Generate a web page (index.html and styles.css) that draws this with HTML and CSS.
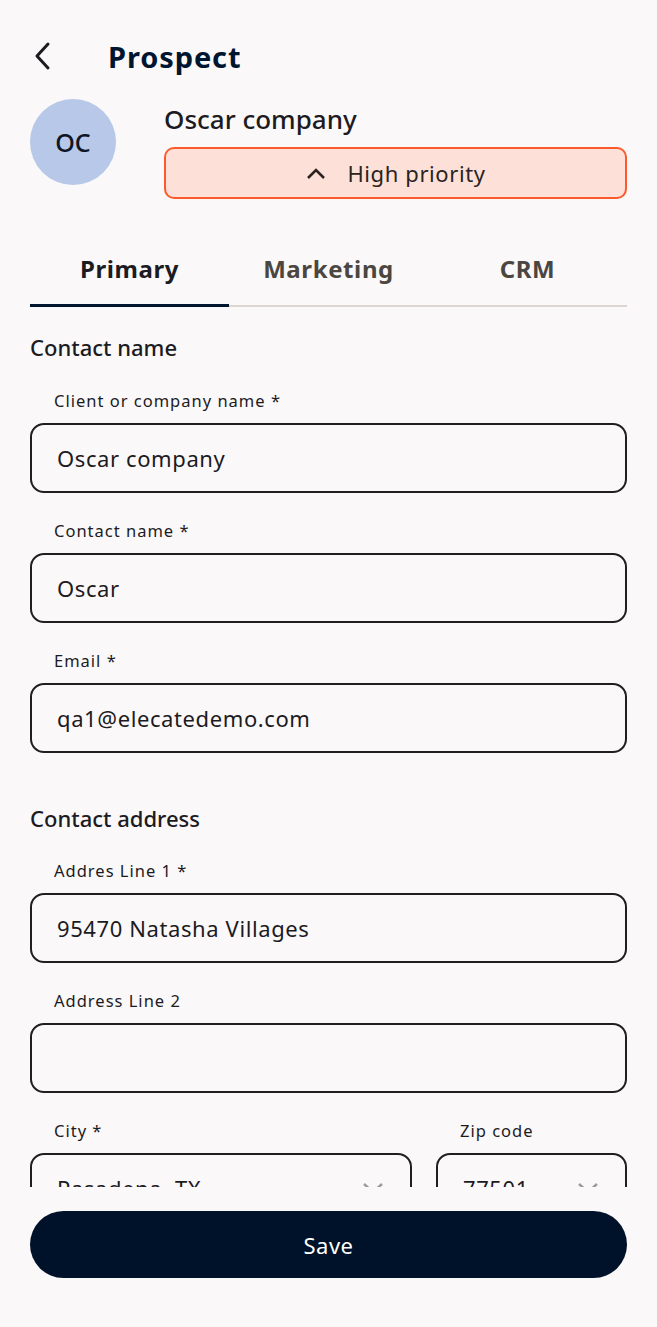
FILE: index.html
```html
<!DOCTYPE html>
<html lang="en">
<head>
<meta charset="utf-8">
<title>Prospect</title>
<link rel="stylesheet" href="styles.css">
</head>
<body>
<div class="screen">
  <div class="scroll">
    <header class="topbar">
      <button class="back" aria-label="Back">
        <svg width="20" height="30" viewBox="0 0 20 30"><path d="M16 3 L5 15 L16 27" fill="none" stroke="#1c1b1f" stroke-width="3" stroke-linecap="round" stroke-linejoin="round"/></svg>
      </button>
      <h1 class="title">Prospect</h1>
    </header>

    <section class="profile">
      <div class="avatar">OC</div>
      <div class="profile-info">
        <div class="company">Oscar company</div>
        <button class="priority">
          <svg width="22" height="14" viewBox="0 0 22 14"><path d="M3 12 L11 4 L19 12" fill="none" stroke="#2a2320" stroke-width="2.6" stroke-linejoin="miter"/></svg>
          <span>High priority</span>
        </button>
      </div>
    </section>

    <nav class="tabs">
      <div class="tab active">Primary</div>
      <div class="tab">Marketing</div>
      <div class="tab">CRM</div>
    </nav>

    <section class="group">
      <h2 class="group-title">Contact name</h2>
      <div class="field">
        <label class="label">Client or company name *</label>
        <div class="input">Oscar company</div>
      </div>
      <div class="field">
        <label class="label">Contact name *</label>
        <div class="input">Oscar</div>
      </div>
      <div class="field">
        <label class="label">Email *</label>
        <div class="input">qa1@elecatedemo.com</div>
      </div>
    </section>

    <section class="group address">
      <h2 class="group-title">Contact address</h2>
      <div class="field">
        <label class="label">Addres Line 1 *</label>
        <div class="input">95470 Natasha Villages</div>
      </div>
      <div class="field">
        <label class="label">Address Line 2</label>
        <div class="input"></div>
      </div>
      <div class="row">
        <div class="field city">
          <label class="label">City *</label>
          <div class="input select">Pasadena, TX
            <svg class="caret" width="24" height="14" viewBox="0 0 24 14"><path d="M3 3 L12 11 L21 3" fill="none" stroke="#9a9a9a" stroke-width="2.4"/></svg>
          </div>
        </div>
        <div class="field zip">
          <label class="label">Zip code</label>
          <div class="input select">77501
            <svg class="caret" width="24" height="14" viewBox="0 0 24 14"><path d="M3 3 L12 11 L21 3" fill="none" stroke="#9a9a9a" stroke-width="2.4"/></svg>
          </div>
        </div>
      </div>
    </section>
  </div>

  <footer class="footer">
    <button class="save">Save</button>
  </footer>
</div>
</body>
</html>
```

FILE: styles.css
```css
* { box-sizing: border-box; }
html, body { margin: 0; padding: 0; }
body {
  background: #fbf8f9;
  font-family: "Noto Sans", "Open Sans", sans-serif;
  color: #1c1b1f;
}
.screen {
  width: 657px;
  height: 1327px;
  display: flex;
  flex-direction: column;
}
.scroll {
  height: 1187px;
  overflow: hidden;
  padding: 0 30px;
  flex: none;
}
.topbar {
  display: flex;
  align-items: center;
  height: 56px;
  margin-top: 28px;
}
.back {
  border: 0;
  background: none;
  padding: 0;
  margin-left: 2px;
  width: 20px;
  height: 30px;
  display: flex;
}
.title {
  margin: 0 0 0 56px;
  font-size: 29px;
  font-weight: 700;
  color: #001530;
  letter-spacing: 0.9px;
}
.profile {
  display: flex;
  align-items: flex-start;
  margin-top: 15px;
}
.avatar {
  width: 86px;
  height: 86px;
  border-radius: 50%;
  background: #b7c8e8;
  color: #0d1626;
  font-size: 25px;
  font-weight: 500;
  display: flex;
  align-items: center;
  justify-content: center;
  flex: none;
}
.profile-info {
  flex: 1;
  margin-left: 48px;
  margin-right: -30px;
  padding-right: 30px;
  display: flex;
  flex-direction: column;
}
.company {
  font-size: 26px;
  font-weight: 500;
  line-height: 40px;
  color: #1c1b1f;
}
.priority {
  margin-top: 8px;
  height: 52px;
  border: 2px solid #fb5b2c;
  background: #fde0d8;
  border-radius: 10px;
  display: flex;
  align-items: center;
  justify-content: center;
  gap: 20px;
  font-family: inherit;
  font-size: 22px;
  letter-spacing: 0.6px;
  color: #2a2320;
  padding: 0;
}
.tabs {
  display: flex;
  margin-top: 48px;
  border-bottom: 2px solid #dcd6d0;
}
.tab {
  flex: 1;
  text-align: center;
  font-size: 24px;
  font-weight: 700;
  letter-spacing: 0.6px;
  color: #4b4640;
  height: 58px;
  line-height: 44px;
  position: relative;
}
.tab.active { color: #1c1b1f; }
.tab.active::after {
  content: "";
  position: absolute;
  left: 0; right: 0; bottom: -2px;
  height: 3px;
  background: #001530;
}
.group-title {
  margin: 0;
  font-size: 22px;
  font-weight: 500;
  line-height: 30px;
  color: #1c1b1f;
  letter-spacing: 0;
}
.group { padding-top: 25px; }
.group.address { padding-top: 50px; }
.field {
  display: flex;
  flex-direction: column;
  margin-top: 26px;
}
.group-title + .field { margin-top: 27px; }
.group.address .group-title + .field { margin-top: 26px; }
.label {
  font-size: 16.5px;
  padding-left: 24px;
  line-height: 24px;
  color: #1c1b1f;
  letter-spacing: 1px;
  margin-bottom: 10px;
}
.input {
  height: 70px;
  border: 2px solid #1f1f22;
  border-radius: 14px;
  padding: 0 25px;
  display: flex;
  align-items: center;
  font-size: 22px;
  color: #1c1b1f;
  letter-spacing: 0.6px;
}
.row {
  display: flex;
  gap: 24px;
}
.city { flex: 0 0 382px; }
.zip { flex: 1; }
.select .caret { margin-left: auto; }
.footer {
  padding: 24px 30px 0;
}
.save {
  width: 100%;
  height: 67px;
  border: 0;
  border-radius: 34px;
  background: #001229;
  color: #ffffff;
  font-family: inherit;
  font-size: 22px;
  letter-spacing: 0.5px;
}
```
